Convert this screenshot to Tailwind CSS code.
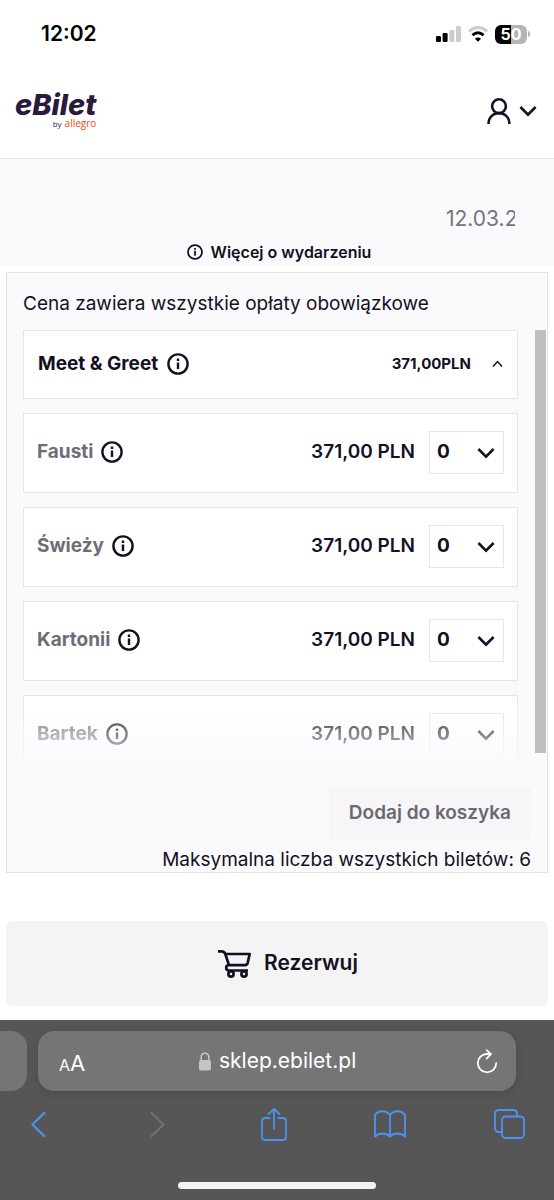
<!DOCTYPE html>
<html lang="pl">
<head>
<meta charset="utf-8">
<meta name="viewport" content="width=device-width, initial-scale=1">
<title>eBilet</title>
<script src="https://cdn.jsdelivr.net/npm/@tailwindcss/browser@4"></script>
</head>
<body class="flex min-h-screen flex-col bg-white font-['Inter',sans-serif] text-[#150f23]">
<svg class="hidden">
  <symbol id="info" viewBox="0 0 22 22"><circle cx="11" cy="11" r="9.6" fill="none" stroke="currentColor" stroke-width="2.4"/><path d="M11 9.4v6.6M11 5.4v2.6" stroke="currentColor" stroke-width="2.4"/></symbol>
  <symbol id="down" viewBox="0 0 18 12"><path d="M1.4 2 9 9.6 16.6 2" fill="none" stroke="currentColor" stroke-width="2.6"/></symbol>
</svg>

<div class="flex h-17 items-center justify-between pr-6 pl-[41px] text-black">
  <span class="text-[21px] font-semibold">12:02</span>
  <div class="flex items-center gap-[7px]">
    <svg class="h-4 w-[25px]" viewBox="0 0 25 16"><rect y="10" width="5" height="6" rx="1.2"/><rect x="6.6" y="7" width="5" height="9" rx="1.2"/><g fill="#ccc"><rect x="13.3" y="4" width="5" height="12" rx="1.2"/><rect x="20" y="0" width="5" height="16" rx="1.2"/></g></svg>
    <svg class="h-4 w-5" viewBox="0 0 20 16" fill="none" stroke-width="2.9"><path d="M.9 5.3Q10-2.6 19.1 5.3" stroke="#ccc"/><path d="M4.4 9.2Q10 4.4 15.6 9.2" stroke="#000"/><path d="M10 15.8 6.9 12.7Q10 10.2 13.1 12.7Z" fill="#000"/></svg>
    <div class="flex items-center gap-px">
      <span class="flex h-[19px] w-8 items-center justify-center rounded-md bg-linear-to-r from-black from-50% to-[#b5b5b5] to-50% text-base font-bold text-white">50</span>
      <span class="h-[6px] w-[2px] rounded-r-full bg-[#b5b5b5]"></span>
    </div>
  </div>
</div>

<header class="flex h-[91px] items-start justify-between border-b border-[#e8e8ea] pr-[17px] pl-[15px] pt-6">
  <a href="#" aria-label="eBilet by allegro" class="flex flex-col items-end text-[#2a1a3e]">
    <span class="text-[29px] leading-[26px] font-extrabold italic">eBilet</span>
    <span class="flex items-baseline gap-[3px] font-['Open_Sans',sans-serif] text-[8px] leading-[10px]"><span>by</span><span class="text-[10px] text-[#f04a12]">allegro</span></span>
  </a>
  <button aria-label="Konto" class="mt-[6px] flex items-center gap-2">
    <svg class="h-[26px] w-6" viewBox="0 0 24 26" fill="none" stroke="currentColor" stroke-width="2.6"><circle cx="12" cy="8.2" r="6.9"/><path d="M1.500 26C1.500 11.500 22.500 11.500 22.500 26"/></svg>
    <svg class="h-3 w-[18px]"><use href="#down"/></svg>
  </button>
</header>

<section class="flex flex-col bg-[#fafafd] pt-[45px] pb-px">
  <div class="mr-[39px] w-[69px] self-end overflow-hidden text-[21px] leading-[30px] whitespace-nowrap text-[#77747f]">12.03.2</div>
  <a href="#" class="flex h-[31px] items-center justify-center gap-2 pt-1 pl-1 text-base font-semibold"><svg class="h-4 w-4"><use href="#info"/></svg>Więcej o wydarzeniu</a>
</section>

<main class="px-[6px] pt-[6px]">
  <section class="border border-[#e2e2e6] bg-[#fafafd]">
    <p class="px-4 pt-4 pb-[11px] text-[19px] leading-[30px]">Cena zawiera wszystkie opłaty obowiązkowe</p>
    <div class="flex items-start gap-[17px] pr-px pl-4">
      <div class="flex min-w-0 flex-1 flex-col gap-[14px]">
        <button class="flex h-[69px] items-center border border-[#e6e6ea] bg-white pr-[14px] pb-px pl-[14px] text-left">
          <span class="text-[19px] font-bold">Meet &amp; Greet</span>
          <svg class="ml-[9px] h-[22px] w-[22px]"><use href="#info"/></svg>
          <span class="ml-auto text-[15px] font-bold">371,00PLN</span>
          <svg class="ml-[21px] h-2 w-[11px]" viewBox="0 0 11 8" fill="none" stroke="currentColor" stroke-width="1.5"><path d="m1 6.500 4.500-5 4.500 5"/></svg>
        </button>
        <div class="flex h-20 items-center border border-[#e6e6ea] bg-white px-[13px] pb-[2px]">
          <span class="text-[19px] font-bold text-[#6f6c77]">Fausti</span>
          <svg class="ml-2 h-[22px] w-[22px]"><use href="#info"/></svg>
          <span class="mr-[14px] ml-auto text-[19px] font-semibold">371,00 PLN</span>
          <div class="relative"><select aria-label="Fausti" class="block h-[43px] w-[75px] appearance-none border border-[#e6e6ea] bg-white px-[7px] text-[19px] font-bold"><option>0</option></select><svg class="pointer-events-none absolute top-4 right-[9px] h-3 w-[18px]"><use href="#down"/></svg></div>
        </div>
        <div class="flex h-20 items-center border border-[#e6e6ea] bg-white px-[13px] pb-[2px]">
          <span class="text-[19px] font-bold text-[#6f6c77]">Świeży</span>
          <svg class="ml-2 h-[22px] w-[22px]"><use href="#info"/></svg>
          <span class="mr-[14px] ml-auto text-[19px] font-semibold">371,00 PLN</span>
          <div class="relative"><select aria-label="Świeży" class="block h-[43px] w-[75px] appearance-none border border-[#e6e6ea] bg-white px-[7px] text-[19px] font-bold"><option>0</option></select><svg class="pointer-events-none absolute top-4 right-[9px] h-3 w-[18px]"><use href="#down"/></svg></div>
        </div>
        <div class="flex h-20 items-center border border-[#e6e6ea] bg-white px-[13px] pb-[2px]">
          <span class="text-[19px] font-bold text-[#6f6c77]">Kartonii</span>
          <svg class="ml-2 h-[22px] w-[22px]"><use href="#info"/></svg>
          <span class="mr-[14px] ml-auto text-[19px] font-semibold">371,00 PLN</span>
          <div class="relative"><select aria-label="Kartonii" class="block h-[43px] w-[75px] appearance-none border border-[#e6e6ea] bg-white px-[7px] text-[19px] font-bold"><option>0</option></select><svg class="pointer-events-none absolute top-4 right-[9px] h-3 w-[18px]"><use href="#down"/></svg></div>
        </div>
        <div class="flex h-20 items-center border border-[#e6e6ea] bg-white px-[13px] pb-[2px] [mask-image:linear-gradient(to_bottom,black_5%,transparent_95%)]">
          <span class="text-[19px] font-bold text-[#6f6c77]">Bartek</span>
          <svg class="ml-2 h-[22px] w-[22px]"><use href="#info"/></svg>
          <span class="mr-[14px] ml-auto text-[19px] font-semibold">371,00 PLN</span>
          <div class="relative"><select aria-label="Bartek" class="block h-[43px] w-[75px] appearance-none border border-[#e6e6ea] bg-white px-[7px] text-[19px] font-bold"><option>0</option></select><svg class="pointer-events-none absolute top-4 right-[9px] h-3 w-[18px]"><use href="#down"/></svg></div>
        </div>
      </div>
      <div class="h-[423px] w-[11px] bg-[#bfbfbf]"></div>
    </div>
    <div class="flex flex-col items-end pt-[13px] pr-4">
      <button class="h-[51px] bg-[#f6f6f8] px-5 text-[19px] font-semibold text-[#6b6873]">Dodaj do koszyka</button>
      <p class="pt-2 text-[19px] leading-[25px]">Maksymalna liczba wszystkich biletów: 6</p>
    </div>
  </section>
  <button class="mt-12 flex h-[85px] w-full items-center justify-center gap-3 rounded-md bg-[#f4f4f4] pb-px pl-[22px] text-[21px] font-semibold">
    <svg class="h-[29px] w-[34px]" viewBox="0 0 34 29" fill="none" stroke="currentColor" stroke-width="2.7" stroke-linejoin="round"><path d="M0 2.300h3.500Q6.500 2.300 7.300 5L11 16.200H26.500Q29 16.200 29.700 13.800L31.700 5H7.300M11 16.200Q8.200 16.200 8.200 18.800T11 21.500H30"/><circle cx="13" cy="25" r="2.600"/><circle cx="26" cy="25" r="2.600"/></svg>
    Rezerwuj
  </button>
</main>

<footer class="mt-[14px] flex flex-1 flex-col bg-[#565656] pt-[11px]">
  <div class="flex h-[60px] gap-[11px] pr-[38px]">
    <div class="w-[27px] rounded-r-2xl bg-[#757575]"></div>
    <div class="flex flex-1 items-center justify-between rounded-2xl bg-[#757575] pr-[18px] pl-[21px] text-white shadow-[0_2px_10px_rgba(0,0,0,0.12)]">
      <button aria-label="Rozmiar tekstu" class="pt-1 text-[22px]"><span class="text-base">A</span>A</button>
      <div class="flex items-center gap-2 pr-[6px] text-[21px]">
        <svg class="h-[19px] w-3" viewBox="0 0 12 19"><path d="M2.200 9V5Q2.200 1.200 6 1.200T9.800 5v4" fill="none" stroke="#c4c3c8" stroke-width="1.6"/><rect y="8" width="12" height="10.500" rx="1.800" fill="#c4c3c8"/></svg>
        sklep.ebilet.pl
      </div>
      <button aria-label="Odśwież"><svg class="h-[25px] w-[22px]" viewBox="0 0 22 25" fill="none" stroke="currentColor" stroke-width="1.8" stroke-linecap="round" stroke-linejoin="round"><path d="M20.200 14.200A9.200 9.200 0 1 1 11 5H15M10.600 1.200 15 5.200 10.600 9.600"/></svg></button>
    </div>
  </div>
  <nav class="flex items-center justify-between pt-4 pr-[29px] pl-[31px] text-[#4f92f5]">
    <button aria-label="Wstecz"><svg class="h-[26px] w-[15px]" viewBox="0 0 15 26" fill="none" stroke="currentColor" stroke-width="2.2" stroke-linecap="round" stroke-linejoin="round"><path d="M13.500 1.800 1.500 13.500l12 11.700"/></svg></button>
    <button aria-label="Dalej" class="ml-4 text-[#757575]"><svg class="h-[26px] w-[15px]" viewBox="0 0 15 26" fill="none" stroke="currentColor" stroke-width="1.8" stroke-linecap="round" stroke-linejoin="round"><path d="m1.500 1.800 12 11.700-12 11.700"/></svg></button>
    <button aria-label="Udostępnij" class="ml-2"><svg class="h-[34px] w-[26px]" viewBox="0 0 26 34" fill="none" stroke="currentColor" stroke-width="1.8" stroke-linecap="round" stroke-linejoin="round"><path d="M8.500 11H4Q1 11 1 14V30Q1 33 4 33H22Q25 33 25 30V14Q25 11 22 11H17.500M13 21.500V2M7.500 7.200 13 1.800l5.500 5.400"/></svg></button>
    <button aria-label="Zakładki"><svg class="h-7 w-8" viewBox="0 0 32 28" fill="none" stroke="currentColor" stroke-width="1.8" stroke-linejoin="round"><path d="M16 5C12 0 4.500 0 1 5V26.500C5 22.500 12 22.500 16 26.500C20 22.500 27 22.500 31 26.500V5C27.500 0 20 0 16 5V26.500"/></svg></button>
    <button aria-label="Karty"><svg class="h-[30px] w-[31px]" viewBox="0 0 31 30" fill="none" stroke="currentColor" stroke-width="1.8"><path d="M8 23H5Q1 23 1 19V5Q1 1 5 1H19Q23 1 23 5V7.500"/><rect x="8" y="7.500" width="22" height="21.500" rx="3.500"/></svg></button>
  </nav>
  <div class="mx-auto mt-auto mb-[11px] h-[7px] w-[198px] rounded-full bg-[#f2f2f2]"></div>
</footer>
</body>
</html>
